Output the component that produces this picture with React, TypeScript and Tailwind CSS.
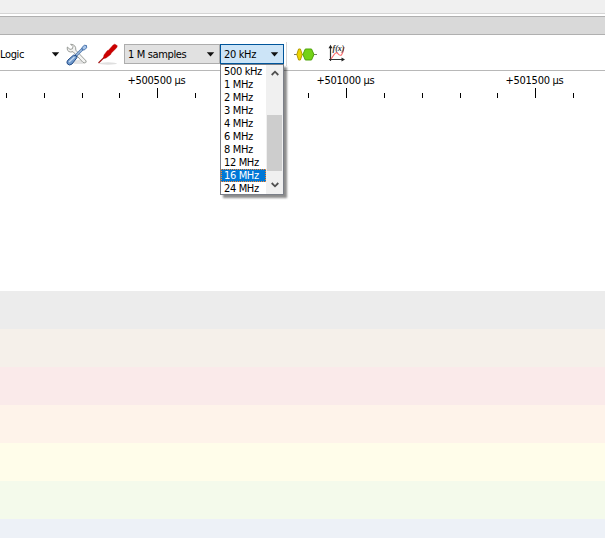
const rates = ['500 kHz', '1 MHz', '2 MHz', '3 MHz', '4 MHz', '6 MHz', '8 MHz', '12 MHz', '16 MHz', '24 MHz'];
const labels = ['+500500 µs', '+501000 µs', '+501500 µs'];
const ticks = [6, 44, 82, 119, 157, 195, 233, 271, 308, 346, 384, 422, 460, 497, 535, 573];
const bands = ['bg-[#ececec]', 'bg-[#f5f0ea]', 'bg-[#faeaea]', 'bg-[#fef3ea]', 'bg-[#fffdea]', 'bg-[#f4faeb]', 'bg-[#edf1f7]'];

function Caret() {
  return (
    <svg width="9" height="5" viewBox="0 0 9 5" className="shrink-0">
      <path d="M.8.3H8.2L4.5 4.4Z" fill="#111" />
    </svg>
  );
}

function ToolsIcon() {
  return (
    <svg width="22" height="23" viewBox="0 0 22 23" className="shrink-0">
      <ellipse cx="13" cy="19" rx="8" ry="2" fill="#e4e4e4" />
      <path d="M4.6 1.2 7 3.6 6.4 5.8 4 6.4 1.3 4Q.6 8.6 4.6 9L7 8.7 17 19.4Q19.8 20.8 20.2 18L9.8 7.2Q10.3 1.6 4.6 1.2Z" fill="#f3f3f2" stroke="#90938f" strokeWidth=".9" />
      <path d="M9.5 13 17 5.5" stroke="#4c78b0" strokeWidth="2.6" />
      <path d="M9.5 13 17 5.5" stroke="#dce8f6" strokeWidth="1" />
      <path d="m16 4.5 2.3-2.2 2.2.2.1 2.3-2 2-2.3.2Z" fill="#a9c6ea" stroke="#3b69a5" strokeWidth=".9" />
      <path d="M2 17 7.4 12.2Q11 11.5 11 14.6L6 21Q3.5 23 1.5 21Q0 19 2 17Z" fill="#719bcd" stroke="#204a87" />
      <path d="m3 19 5.5-5" stroke="#c6daf2" strokeWidth="1.3" />
    </svg>
  );
}

function ProbeIcon() {
  return (
    <svg width="22" height="23" viewBox="0 0 22 23" className="shrink-0">
      <ellipse cx="11" cy="20.5" rx="9" ry="1.2" fill="#dfdfdf" />
      <path d="M1.5 20 9 12.5" stroke="#a51515" strokeWidth="1.2" />
      <path d="m7 12 3.3-4.3 1.2-.4L16.2 2l1.6-.8 2.5 1.6-.7 2-5.5 5.4-.5 1.3L9 15 6.5 15.5Z" fill="#cc0000" stroke="#b60000" strokeWidth=".5" />
    </svg>
  );
}

function DecoderIcon() {
  return (
    <svg width="23" height="14" viewBox="0 0 23 14" className="shrink-0">
      <path d="M0 7.5H23" stroke="#777" />
      <path d="M4.6 2H6.4L8.2 7.5 6.4 13H4.6L2.8 7.5Z" fill="#edd400" stroke="#b59b00" />
      <path d="M11.3 2H17.5L20 7.5 17.5 13H11.3L8.9 7.5Z" fill="#73d216" stroke="#4fa30a" />
    </svg>
  );
}

function MathIcon() {
  return (
    <svg width="18" height="19" viewBox="0 0 18 19" className="shrink-0">
      <path d="M2.5 17V3M1 15.5H15" fill="none" stroke="#333" strokeWidth="1.2" />
      <path d="M.5 4.3 2.5.8 4.5 4.3ZM13.5 13.5 17 15.5 13.5 17.5Z" fill="#222" />
      <path d="M3 15 6.5 10Q8.5 7.5 10 9.7T13.5 11Q15.5 8 16 3" fill="none" stroke="#f66" strokeWidth="1.1" />
      <text x="4.5" y="7.2" fontSize="8" fontStyle="italic" fontWeight="bold" fontFamily="Liberation Serif, serif" fill="#333" textLength="12" letterSpacing="0">f(x)</text>
    </svg>
  );
}

function Arrow({ up = false }: { up?: boolean }) {
  return (
    <svg width="8" height="6" viewBox="0 0 8 6" className={up ? '' : 'rotate-180'}>
      <path d="M.7 5 4 1.7 7.3 5" fill="none" stroke="#505050" strokeWidth="1.8" />
    </svg>
  );
}

function Dropdown() {
  return (
    <div className="absolute top-[19px] -left-px z-10 flex h-[131px] w-16 border border-[#7b7f88] bg-white shadow-[3px_3px_2px_rgba(0,0,0,0.45)]">
      <div className="w-[45px]">
        {rates.map((rate) => (
          <div key={rate} className={`flex h-[13px] items-center border border-dotted pl-[2px] ${rate === '16 MHz' ? 'border-[#ff8728] bg-[#0078d7] text-white' : 'border-transparent'}`}>
            <span>{rate}</span>
          </div>
        ))}
      </div>
      <div className="flex w-[17px] flex-col items-center bg-[#f0f0f0]">
        <div className="flex h-[50px] items-start pt-[5px]"><Arrow up /></div>
        <div className="h-14 w-[15px] bg-[#cdcdcd]" />
        <div className="flex grow items-end pb-[6px]"><Arrow /></div>
      </div>
    </div>
  );
}

export default function App() {
  return (
    <div className="h-[538px] w-[605px] overflow-hidden bg-white font-['DejaVu_Sans_Condensed','DejaVu_Sans',sans-serif] text-[11px] leading-[13px] tracking-[-0.35px] whitespace-nowrap text-black">
      <div className="h-[14px] border-b border-[#d5d5d5] bg-[#f0f0f0]" />
      <div className="mt-[2px] h-[19px] border-y border-[#b0b0b0] bg-[#d9d9d9]" />
      <div className="flex h-9 items-start border-b border-[#b8b8b8]">
        <div className="flex h-[38px] w-[60px] shrink-0 items-center justify-between"><span>Logic</span><Caret /></div>
        <div className="mt-2 ml-[6px]"><ToolsIcon /></div>
        <div className="mt-2 ml-[9px]"><ProbeIcon /></div>
        <div className="mt-[9px] ml-[5px] flex h-5 w-24 items-center justify-between border border-[#adadad] bg-[#e1e1e1] pt-px pr-[4px] pl-[3px]">
          <span>1 M samples</span><Caret />
        </div>
        <div className="relative mt-[9px] flex h-5 w-16 items-center justify-between border border-[#00559b] bg-[#cce4f7] pt-px pr-[4px] pl-[3px]">
          <span>20 kHz</span><Caret />
          <Dropdown />
        </div>
        <div className="mt-[7px] ml-[2px] h-6 w-px bg-[#d5d5d5]" />
        <div className="mt-3 ml-[7px]"><DecoderIcon /></div>
        <div className="mt-[9px] ml-[11px]"><MathIcon /></div>
      </div>
      <div className="h-[220px]">
        <div className="flex h-[17px] pt-[3px] pl-[62px]">
          {labels.map((label) => <div key={label} className="w-[189px] shrink-0 text-center tracking-[-0.27px]">{label}</div>)}
        </div>
        <div className="flex h-[10px] items-end">
          {ticks.map((x, i) => (
            <div key={x} className={`w-px shrink-0 bg-black ${i % 5 === 4 ? 'h-[10px]' : 'h-[5px]'}`} style={{ marginLeft: i ? x - ticks[i - 1] - 1 : x }} />
          ))}
        </div>
      </div>
      {bands.map((band) => <div key={band} className={`h-[38px] ${band}`} />)}
    </div>
  );
}
